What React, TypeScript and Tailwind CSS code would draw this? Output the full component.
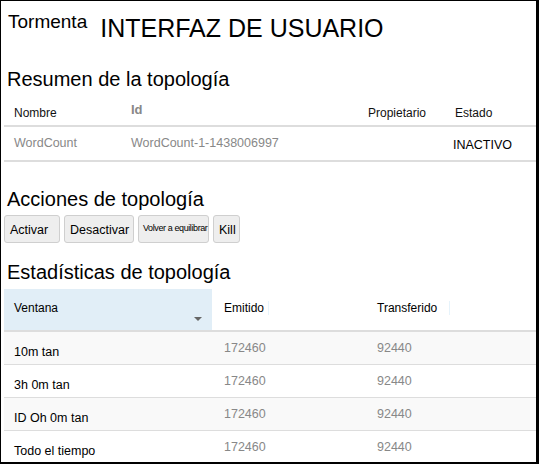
const summaryCols = "grid grid-cols-[117px_237px_87px_1fr]";
const statsCols = "grid grid-cols-[208px_154px_1fr]";

const stats = [
  { win: "10m tan", emitted: "172460", transferred: "92440" },
  { win: "3h 0m tan", emitted: "172460", transferred: "92440" },
  { win: "ID Oh 0m tan", emitted: "172460", transferred: "92440" },
  { win: "Todo el tiempo", emitted: "172460", transferred: "92440" },
];

const Heading = ({ children, className }: { children: React.ReactNode; className?: string }) => (
  <h2 className={"text-[20px] leading-6 text-black px-[6px] " + (className ?? "")}>{children}</h2>
);

const ActionButton = ({ label, width, small }: { label: string; width: string; small?: boolean }) => (
  <button
    className={
      "h-[28px] rounded-[3px] border border-[#cfcfcf] bg-[#eeeeee] text-black whitespace-nowrap flex justify-start " +
      width +
      (small ? " items-start text-[9px] pl-[4px] pt-[6px] tracking-[-0.4px]" : " items-center text-[12.5px] pl-[5px] pt-[3px]")
    }
  >
    {label}
  </button>
);

export default function App() {
  return (
    <div
      className="w-[539px] h-[464px] overflow-hidden bg-white border-l border-t border-r-[3px] border-b-2 border-black text-black"
      style={{ fontFamily: '"Liberation Sans", Arial, sans-serif' }}
    >
      {/* top bar */}
      <div className="flex items-start pl-[7px] pt-[9px]">
        <span className="text-[19px] leading-6">Tormenta</span>
        <span className="ml-[13px] mt-[2px] text-[25px] leading-8">INTERFAZ DE USUARIO</span>
      </div>

      <Heading className="mt-[23px]">Resumen de la topología</Heading>

      {/* summary table */}
      <div className="ml-[3px] mt-[10px]">
        <div className={summaryCols + " h-[26px] items-center border-b-2 border-[#dddddd] text-[12px]"}>
          <span className="pl-[10px] text-[#111]">Nombre</span>
          <span className="pl-[10px] text-[13px] font-bold text-[#888] -mt-[6px]">Id</span>
          <span className="pl-[10px] text-[#111]">Propietario</span>
          <span className="pl-[10px] text-[#111]">Estado</span>
        </div>
        <div className={summaryCols + " h-[35px] items-center border-b-2 border-[#dddddd] text-[12.5px]"}>
          <span className="pl-[10px] text-[#888]">WordCount</span>
          <span className="pl-[10px] text-[#888]">WordCount-1-1438006997</span>
          <span />
          <span className="pl-[8px] pt-[3px]">INACTIVO</span>
        </div>
      </div>

      <Heading className="mt-[25px]">Acciones de topología</Heading>

      <div className="flex items-start gap-[4px] px-[3px] mt-[4px]">
        <ActionButton label="Activar" width="w-[56px]" />
        <ActionButton label="Desactivar" width="w-[70px]" />
        <ActionButton label="Volver a equilibrar" width="w-[71px]" small />
        <ActionButton label="Kill" width="w-[27px]" />
      </div>

      <Heading className="mt-[17px]">Estadísticas de topología</Heading>

      {/* stats table */}
      <div className="ml-[3px] mt-[5px]">
        <div className={statsCols + " h-[43px] border-b-2 border-[#dddddd] text-[12px]"}>
          <div className="relative bg-[#e1eef7] pl-[10px] pt-[10px]">
            Ventana
            <span className="absolute right-[10px] top-[28px] h-0 w-0 border-x-[4px] border-t-[4px] border-x-transparent border-t-[#666]" />
          </div>
          <div className="pl-[12px] pt-[10px]">
            <span className="pr-[4px] border-r border-[#e6f3fb]">Emitido</span>
          </div>
          <div className="pl-[11px] pt-[10px]">
            <span className="pr-[12px] border-r border-[#e6f3fb]">Transferido</span>
          </div>
        </div>
        {stats.map((row, i) => (
          <div
            key={row.win}
            className={
              statsCols +
              " h-[33px] text-[12.5px] border-b border-[#dddddd] " +
              (i % 2 === 0 ? "bg-[#f9f9f9]" : "bg-white")
            }
          >
            <span className="pl-[10px] pt-[11px]">{row.win}</span>
            <span className="pl-[12px] pt-[7px] text-[#888]">{row.emitted}</span>
            <span className="pl-[11px] pt-[7px] text-[#888]">{row.transferred}</span>
          </div>
        ))}
      </div>
    </div>
  );
}
